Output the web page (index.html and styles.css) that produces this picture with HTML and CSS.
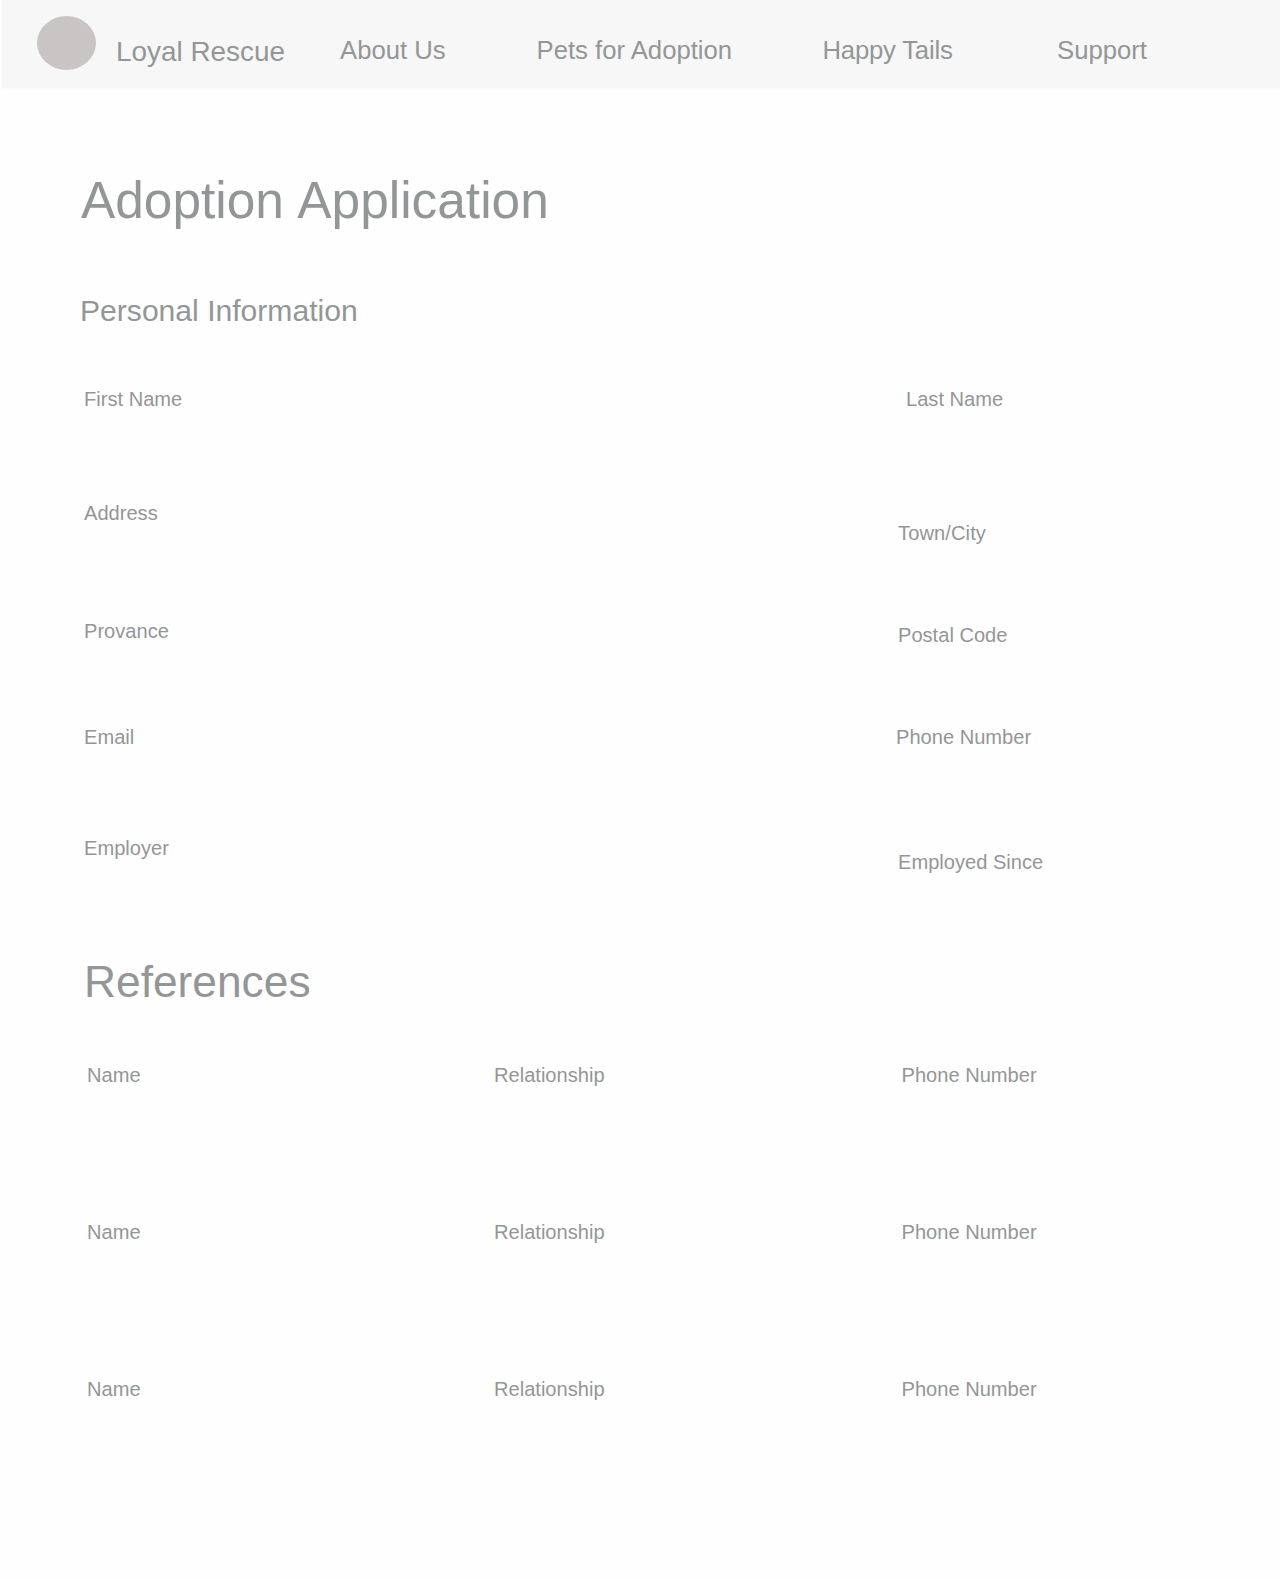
FILE: index.html
```html
<!DOCTYPE html>
<html lang="en">
<head>
<meta charset="utf-8">
<title>Loyal Rescue - Adoption Application</title>
<link rel="stylesheet" href="styles.css">
</head>
<body>
<header class="site-header">
  <span class="logo"></span>
  <span class="brand">Loyal Rescue</span>
  <nav class="nav">
    <a class="nav-link">About Us</a>
    <a class="nav-link">Pets for Adoption</a>
    <a class="nav-link tails">Happy Tails</a>
    <a class="nav-link">Support</a>
  </nav>
</header>
<main class="page">
  <h1 class="title">Adoption Application</h1>
  <h2 class="subtitle">Personal Information</h2>
  <section class="personal">
    <div class="column">
      <p class="field">First Name</p>
      <p class="field address">Address</p>
      <p class="field province">Provance</p>
      <p class="field email">Email</p>
      <p class="field employer">Employer</p>
    </div>
    <div class="column">
      <p class="field last-name">Last Name</p>
      <p class="field town">Town/City</p>
      <p class="field postal">Postal Code</p>
      <p class="field phone">Phone Number</p>
      <p class="field since">Employed Since</p>
    </div>
  </section>
  <h2 class="references-title">References</h2>
  <section class="references">
    <p class="field">Name</p><p class="field">Relationship</p><p class="field">Phone Number</p>
    <p class="field">Name</p><p class="field">Relationship</p><p class="field">Phone Number</p>
    <p class="field">Name</p><p class="field">Relationship</p><p class="field">Phone Number</p>
  </section>
</main>
</body>
</html>
```
FILE: styles.css
```css
* {
  box-sizing: border-box;
}

body {
  margin: 0;
  min-height: 1581px;
  background: #fefefe;
  color: #939697;
  font-family: "Liberation Sans", Arial, sans-serif;
  white-space: nowrap;
}

h1, h2, p {
  margin: 0;
  font-weight: 400;
}

.site-header {
  display: flex;
  align-items: flex-start;
  height: 88px;
  margin-left: 2px;
  padding-left: 35px;
  background: #f7f7f7;
  box-shadow: 0 0 3px #f7f7f7;
}

.logo {
  width: 59px;
  height: 54px;
  margin-top: 16px;
  border-radius: 50%;
  background: #c9c5c5;
}

.brand {
  width: 224px;
  margin-top: 36px;
  padding-left: 20px;
  font-size: 27.9px;
  line-height: 32px;
}

.nav {
  display: grid;
  grid-template-columns: 196.5px 286px 234.5px auto;
  margin-top: 35px;
  padding-left: 20px;
  font-size: 25.7px;
  line-height: 30px;
}

.tails {
  letter-spacing: -0.2px;
}

.page {
  padding-left: 80px;
}

.title {
  margin-top: 82px;
  padding-left: 1px;
  font-size: 51.4px;
  line-height: 60px;
  word-spacing: 2px;
}

.subtitle {
  margin-top: 64px;
  font-size: 30.1px;
  line-height: 34px;
}

.personal {
  display: grid;
  grid-template-columns: 814px auto;
  height: 487px;
  margin-top: 59px;
  padding-left: 4px;
}

.field {
  font-size: 20.1px;
  line-height: 24px;
}

.address { margin-top: 90px; }
.province { margin-top: 94px; }
.email { margin-top: 82px; }
.employer { margin-top: 87px; }

.last-name { padding-left: 8px; }
.town { margin-top: 110px; letter-spacing: 0.1px; }
.postal { margin-top: 78px; }
.phone { margin-top: 78px; margin-left: -2px; }
.since { margin-top: 101px; }

.references-title {
  margin-top: 82px;
  padding-left: 4px;
  font-size: 44.3px;
  line-height: 52px;
}

.references {
  display: grid;
  grid-template-columns: 407px 407.5px auto;
  row-gap: 133px;
  margin-top: 55px;
  padding-left: 7px;
}
```
